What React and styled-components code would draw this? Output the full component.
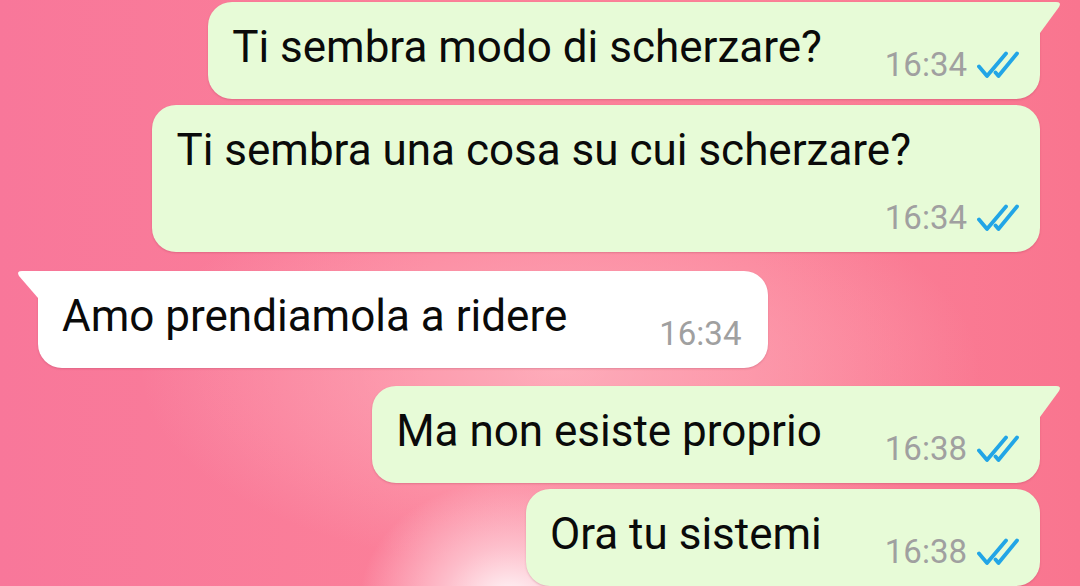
import React from 'react'
import styled, { createGlobalStyle, css } from 'styled-components'

const Global = createGlobalStyle`
  html, body { margin: 0; padding: 0; height: 100%; }
  body {
    overflow: hidden;
    font-family: Roboto, "Noto Sans", "Liberation Sans", sans-serif;
    background:
      radial-gradient(ellipse 150px 120px at 510px 600px, rgba(255,255,255,0.95), rgba(255,230,235,0.6) 45%, rgba(255,200,210,0) 100%),
      radial-gradient(ellipse 420px 200px at 560px 370px, rgba(255,190,200,0.7), rgba(255,170,185,0) 100%),
      linear-gradient(90deg, #f8779a 0%, #fb8099 40%, #fb8198 70%, #f9758f 100%);
  }
`

const Chat = styled.div`
  width: 1080px;
  height: 586px;
  box-sizing: border-box;
  padding: 2px 40px 0 38px;
  display: flex;
  flex-direction: column;
`

const outTail = css`
  border-top-right-radius: 0;
  &::after {
    content: '';
    position: absolute;
    top: 0;
    left: 100%;
    width: 22px;
    height: 32px;
    background: inherit;
    clip-path: path('M0 0 H16 Q22 0 19 5 L0 31 Z');
  }
`

const inTail = css`
  border-top-left-radius: 0;
  &::before {
    content: '';
    position: absolute;
    top: 0;
    right: 100%;
    width: 22px;
    height: 28px;
    background: inherit;
    clip-path: path('M22 0 H6 Q0 0 3 5 L22 27 Z');
  }
`

const Bubble = styled.div`
  position: relative;
  display: flex;
  flex-direction: ${p => (p.$stacked ? 'column' : 'row')};
  align-items: flex-end;
  align-self: ${p => (p.$out ? 'flex-end' : 'flex-start')};
  margin-top: ${p => p.$gap}px;
  padding: 20px ${p => (p.$out ? 21 : 27)}px 16px 24px;
  border-radius: 24px;
  background: ${p => (p.$out ? '#e7fbd7' : '#ffffff')};
  box-shadow: 0 1px 2px rgba(150, 40, 70, 0.25);
  ${p => p.$tail && (p.$out ? outTail : inTail)}
`

const Text = styled.span`
  align-self: flex-start;
  font-size: 44px;
  line-height: 51px;
  color: #0a0a0a;
  white-space: nowrap;
  margin-bottom: 10px;
  margin-right: ${p => (p.$stacked ? 108 : 0)}px;
`

const Meta = styled.div`
  display: flex;
  align-items: center;
  gap: 10px;
  margin-left: ${p => (p.$stacked ? 0 : p.$out ? 63 : 92)}px;
  margin-top: ${p => (p.$stacked ? 13 : 0)}px;
`

const Time = styled.span`
  font-size: 33px;
  line-height: 37px;
  color: #a0a0a0;
`

const Ticks = () => (
  <svg width="42" height="28" viewBox="0 0 42 28" fill="none" stroke="#22a5e6" strokeWidth="3.8" strokeLinecap="round" strokeLinejoin="round">
    <path d="M2 15.5 L10 25 L29 2.5" />
    <path d="M18.5 21.5 L21.5 25 L40 2.5" />
  </svg>
)

const messages = [
  { text: 'Ti sembra modo di scherzare?', time: '16:34', out: true, tail: true, gap: 0 },
  { text: 'Ti sembra una cosa su cui scherzare?', time: '16:34', out: true, stacked: true, gap: 6 },
  { text: 'Amo prendiamola a ridere', time: '16:34', out: false, tail: true, gap: 19 },
  { text: 'Ma non esiste proprio', time: '16:38', out: true, tail: true, gap: 18 },
  { text: 'Ora tu sistemi', time: '16:38', out: true, gap: 6 },
]

export default function App() {
  return (
    <>
      <Global />
      <Chat>
        {messages.map((m, i) => (
          <Bubble key={i} $out={m.out} $tail={m.tail} $stacked={m.stacked} $gap={m.gap}>
            <Text $stacked={m.stacked}>{m.text}</Text>
            <Meta $out={m.out} $stacked={m.stacked}>
              <Time>{m.time}</Time>
              {m.out && <Ticks />}
            </Meta>
          </Bubble>
        ))}
      </Chat>
    </>
  )
}
